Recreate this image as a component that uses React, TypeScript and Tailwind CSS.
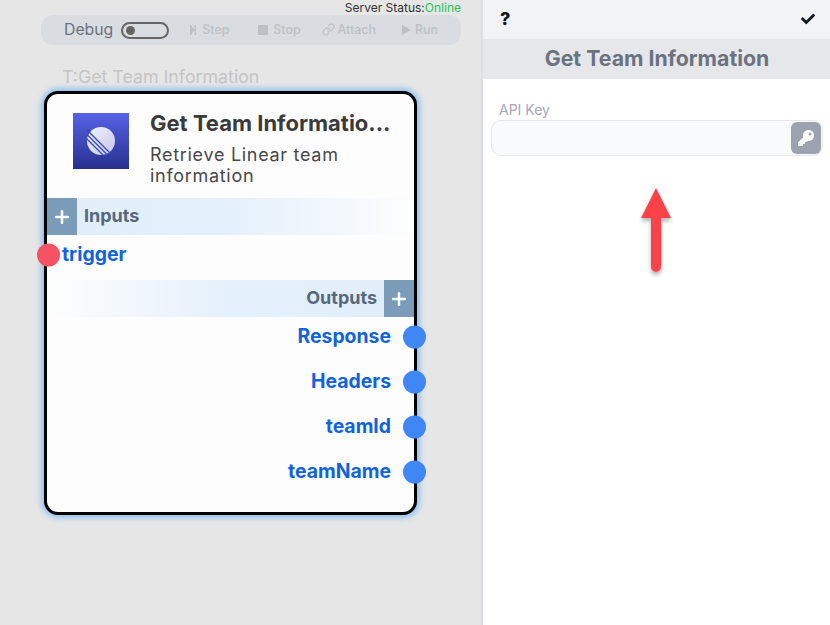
import { Link, Plus } from "lucide-react";
import { FaCheck, FaKey } from "react-icons/fa";

function ToolButton({ icon, label, className }: { icon: React.ReactNode; label: string; className: string }) {
  return (
    <div className={`flex items-center text-[12.4px] font-medium text-[#bcc0c5] ${className}`}>
      {icon}
      <span>{label}</span>
    </div>
  );
}

function Toolbar() {
  return (
    <div className="relative h-[45px] w-[481px] shrink-0">
      <div className="absolute top-0 right-[20px] text-[12px] leading-[15px] text-[#333]">
        Server Status:<span className="text-[#22c55e]">Online</span>
      </div>
      <div className="absolute top-[15px] left-[41px] flex h-[30px] w-[420px] items-center rounded-[12px] bg-[#d9dce0] pl-[23px]">
        <span className="text-[15.8px] text-[#6b7280]">Debug</span>
        <div className="ml-[8px] flex h-[17px] w-[48px] items-center rounded-full border-2 border-[#666] pl-[3px]">
          <div className="h-[9px] w-[9px] rounded-full bg-[#666]" />
        </div>
        <ToolButton
          className="ml-[21px]"
          label="Step"
          icon={
            <svg width="6" height="10" viewBox="0 0 6 10" className="mr-[6px]" fill="currentColor">
              <path d="M0 0h1.500v10H0zM1.500 1l3 4-3 4zM4.500 0H6v10H4.500z" />
            </svg>
          }
        />
        <ToolButton
          className="ml-[29px]"
          label="Stop"
          icon={<div className="mr-[5px] h-[10px] w-[10px] bg-current" />}
        />
        <ToolButton className="ml-[21px]" label="Attach" icon={<Link size={13} className="mr-[3px]" />} />
        <ToolButton
          className="ml-[26px]"
          label="Run"
          icon={
            <svg width="9" height="10" viewBox="0 0 9 10" className="mr-[4px]" fill="currentColor">
              <path d="M0 0l9 5-9 5z" />
            </svg>
          }
        />
      </div>
    </div>
  );
}

function LinearLogo() {
  return (
    <div className="flex h-[56px] w-[56px] shrink-0 items-center justify-center bg-gradient-to-b from-[#5763e6] to-[#27308f]">
      <svg width="28" height="28" viewBox="0 0 28 28">
        <defs>
          <linearGradient id="ball" x1="0" y1="0" x2="1" y2="1">
            <stop offset="0" stopColor="#f2f3fb" />
            <stop offset="1" stopColor="#c3c6ea" />
          </linearGradient>
        </defs>
        <circle cx="14" cy="14" r="14" fill="url(#ball)" />
        <g stroke="#3d47b6" strokeWidth="1.3">
          <path d="M-2 1 27 30" />
          <path d="M-2 5.500 22.500 30" />
          <path d="M-2 10 18 30" />
        </g>
      </svg>
    </div>
  );
}

function Port({ side, color }: { side: "left" | "right"; color: string }) {
  const place = side === "left" ? "left-[-10px]" : "right-[-12px]";
  return <div className={`absolute top-1/2 h-[23px] w-[23px] -translate-y-1/2 rounded-full ${place} ${color}`} />;
}

function OutputRow({ name }: { name: string }) {
  return (
    <div className="relative flex h-[45px] items-center justify-end pr-[23px] text-[19.4px] font-bold text-[#1163dc]">
      {name}
      <Port side="right" color="bg-[#3f87f5]" />
    </div>
  );
}

function NodeCard() {
  return (
    <div className="absolute top-[91px] left-[44px] h-[424px] w-[373px] rounded-[14px] border-[3px] border-black bg-[#fdfdfd] shadow-[0_0_6px_2px_#7db8f0]">
      <div className="flex h-[104px] pt-[19px] pl-[26px]">
        <LinearLogo />
        <div className="-mt-[2px] ml-[21px] w-[240px] min-w-0">
          <div className="text-[22px] leading-[24px] font-bold whitespace-nowrap text-[#3a3a3c]">
            Get Team Informatio...
          </div>
          <div className="mt-[9px] text-[18px] leading-[21px] tracking-[0.7px] text-[#48484a]">
            Retrieve Linear team information
          </div>
        </div>
      </div>
      <div className="flex h-[37px] items-center bg-gradient-to-r from-[#e0eefa] via-[#e4f0fb] to-[#fdfdfd]">
        <div className="flex h-full w-[30px] items-center justify-center bg-[#7a9cb8] text-white">
          <Plus size={20} strokeWidth={3} />
        </div>
        <span className="ml-[7px] pb-[2px] text-[18px] font-bold text-[#56687c]">Inputs</span>
      </div>
      <div className="relative mt-[1px] flex h-[38px] items-center pl-[15px] text-[19.4px] font-bold text-[#1163dc]">
        trigger
        <Port side="left" color="bg-[#f55266]" />
      </div>
      <div className="mt-[6px] flex h-[37px] items-center justify-end bg-gradient-to-r from-[#fdfdfd] via-[#e4f0fb] to-[#e0eefa]">
        <span className="mr-[7px] pb-[2px] text-[18px] font-bold text-[#56687c]">Outputs</span>
        <div className="flex h-full w-[30px] items-center justify-center bg-[#7a9cb8] text-white">
          <Plus size={20} strokeWidth={3} />
        </div>
      </div>
      <div className="-mt-[3px]">
        <OutputRow name="Response" />
        <OutputRow name="Headers" />
        <OutputRow name="teamId" />
        <OutputRow name="teamName" />
      </div>
    </div>
  );
}

function SidePanel() {
  return (
    <div className="relative h-full flex-1 border-l-2 border-[#dcdee3] bg-white">
      <div className="flex h-[39px] items-center justify-between bg-[#f2f3f5] pr-[15px] pl-[17px] text-[#111827]">
        <span className="-mt-[2px] text-[18px] font-extrabold">?</span>
        <FaCheck size={14} className="-mt-[2px]" />
      </div>
      <div className="flex h-[40px] items-center justify-center bg-[#e5e7eb] pl-[1px] text-[21.300px] font-bold text-[#6b7280]">
        Get Team Information
      </div>
      <div className="mt-[22px] pl-[16px] text-[14px] leading-[18px] text-[#a8a6b8]">API Key</div>
      <div className="mt-[1px] ml-[8px] flex h-[36px] w-[332px] items-center justify-end rounded-[10px] border border-[#e5e7eb] bg-[#f9fafb] pr-[1px]">
        <div className="flex h-[32px] w-[30px] items-center justify-center rounded-[6px] bg-[#9ca3af] text-white">
          <FaKey size={16} />
        </div>
      </div>
      <svg className="absolute top-[187px] left-[156px]" width="34" height="95" viewBox="0 0 34 95">
        <defs>
          <filter id="arrowShadow" x="-30%" y="-10%" width="160%" height="125%">
            <feDropShadow dx="0" dy="3" stdDeviation="2" floodColor="#000" floodOpacity="0.3" />
          </filter>
        </defs>
        <path d="M17 1 32 31H22V80a5 5 0 0 1-10 0V31H2Z" fill="#fb4348" filter="url(#arrowShadow)" />
      </svg>
    </div>
  );
}

export default function App() {
  return (
    <div className="flex h-[625px] w-[830px] overflow-hidden bg-[#e6e6e6] font-['Inter',sans-serif]">
      <div className="relative h-full w-[481px] shrink-0">
        <Toolbar />
        <div className="absolute top-[66px] left-[62px] text-[17.800px] leading-[22px] text-[#c4c4c4]">T:Get Team Information</div>
        <NodeCard />
      </div>
      <SidePanel />
    </div>
  );
}
